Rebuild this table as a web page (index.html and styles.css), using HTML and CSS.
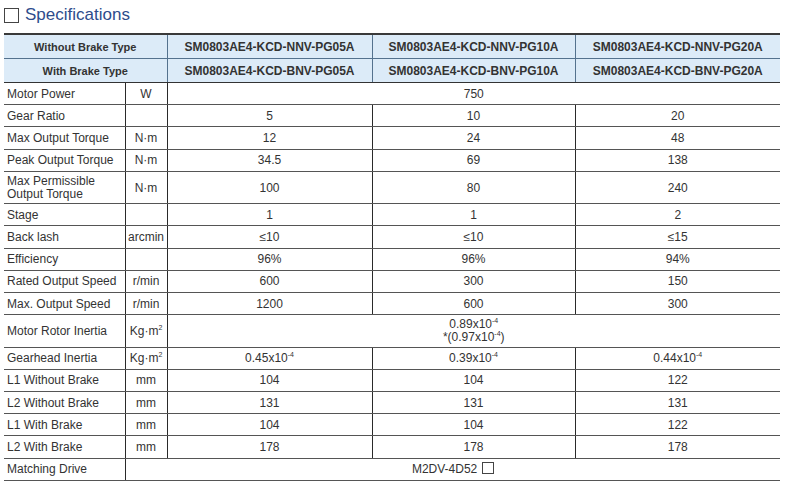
FILE: index.html
```html
<!DOCTYPE html>
<html>
<head>
<meta charset="utf-8">
<link rel="stylesheet" href="styles.css">
</head>
<body>
<div class="page">
  <h2 class="title"><span class="box"></span>Specifications</h2>
  <table class="spec">
    <colgroup>
      <col class="c-label"><col class="c-unit"><col class="c-val"><col class="c-val2"><col class="c-val3">
    </colgroup>
    <tr class="hd hd1">
      <th colspan="2" class="hlabel">Without Brake Type</th>
      <th>SM0803AE4-KCD-NNV-PG05A</th>
      <th>SM0803AE4-KCD-NNV-PG10A</th>
      <th>SM0803AE4-KCD-NNV-PG20A</th>
    </tr>
    <tr class="hd hd2">
      <th colspan="2" class="hlabel">With Brake Type</th>
      <th>SM0803AE4-KCD-BNV-PG05A</th>
      <th>SM0803AE4-KCD-BNV-PG10A</th>
      <th>SM0803AE4-KCD-BNV-PG20A</th>
    </tr>
    <tr><td class="lbl">Motor Power</td><td>W</td><td colspan="3">750</td></tr>
    <tr><td class="lbl">Gear Ratio</td><td></td><td>5</td><td>10</td><td>20</td></tr>
    <tr><td class="lbl">Max Output Torque</td><td>N·m</td><td>12</td><td>24</td><td>48</td></tr>
    <tr><td class="lbl">Peak Output Torque</td><td>N·m</td><td>34.5</td><td>69</td><td>138</td></tr>
    <tr class="tall"><td class="lbl two">Max Permissible<br>Output Torque</td><td>N·m</td><td>100</td><td>80</td><td>240</td></tr>
    <tr><td class="lbl">Stage</td><td></td><td>1</td><td>1</td><td>2</td></tr>
    <tr><td class="lbl">Back lash</td><td>arcmin</td><td>≤10</td><td>≤10</td><td>≤15</td></tr>
    <tr><td class="lbl">Efficiency</td><td></td><td>96%</td><td>96%</td><td>94%</td></tr>
    <tr><td class="lbl">Rated Output Speed</td><td>r/min</td><td>600</td><td>300</td><td>150</td></tr>
    <tr><td class="lbl">Max. Output Speed</td><td>r/min</td><td>1200</td><td>600</td><td>300</td></tr>
    <tr class="tall"><td class="lbl">Motor Rotor Inertia</td><td>Kg·m<sup>2</sup></td><td colspan="3" class="two">0.89x10<sup>-4</sup><br>*(0.97x10<sup>-4</sup>)</td></tr>
    <tr><td class="lbl">Gearhead Inertia</td><td>Kg·m<sup>2</sup></td><td>0.45x10<sup>-4</sup></td><td>0.39x10<sup>-4</sup></td><td>0.44x10<sup>-4</sup></td></tr>
    <tr><td class="lbl">L1 Without Brake</td><td>mm</td><td>104</td><td>104</td><td>122</td></tr>
    <tr><td class="lbl">L2 Without Brake</td><td>mm</td><td>131</td><td>131</td><td>131</td></tr>
    <tr><td class="lbl">L1 With Brake</td><td>mm</td><td>104</td><td>104</td><td>122</td></tr>
    <tr><td class="lbl">L2 With Brake</td><td>mm</td><td>178</td><td>178</td><td>178</td></tr>
    <tr><td class="lbl">Matching Drive</td><td colspan="4">M2DV-4D52 <span class="sq"></span></td></tr>
  </table>
</div>
</body>
</html>
```

FILE: styles.css
```css
html, body {
  margin: 0;
  padding: 0;
  background: #ffffff;
}
.page {
  padding: 0 5px 0 4px;
  font-family: "Liberation Sans", Arial, sans-serif;
  color: #333333;
}
.title {
  margin: 0;
  height: 33px;
  display: flex;
  align-items: center;
  font-weight: normal;
  font-size: 17px;
  color: #2e4c8c;
  padding-bottom: 3px;
  box-sizing: border-box;
}
.title .box {
  display: inline-block;
  width: 13px;
  height: 13px;
  border: 1px solid #444;
  margin-right: 6px;
  margin-top: 1px;
}
.spec {
  border-collapse: collapse;
  width: 776px;
  table-layout: fixed;
  font-size: 12px;
}
.c-label { width: 121px; }
.c-unit { width: 42px; }
.c-val { width: 205px; }
.c-val2 { width: 203px; }
.c-val3 { width: 205px; }
.spec th, .spec td {
  padding: 0;
  text-align: center;
  vertical-align: middle;
  border: 1px solid #555;
  height: 21.2px;
  line-height: 14px;
  white-space: nowrap;
}
.spec td { border-left-color: #2a2a2a; border-right-color: #2a2a2a; }
.spec tr > :first-child { border-left: none; }
.spec tr > :last-child { border-right: none; }
.spec tr.hd1 th { border-top: 2px solid #3a3a3a; }
.spec th {
  background: #dcebf8;
  font-weight: bold;
  height: 23px;
  border-color: #54728e;
  color: #333;
}
.spec tr.hd2 th { border-bottom: 1px solid #333; }
.spec th { font-size: 12px; }
.spec th.hlabel { font-size: 11px; }
.spec td.lbl {
  text-align: left;
  padding-left: 3px;
}
.spec td.two { line-height: 13px; }
.spec tr.tall td { height: 31.5px; }
.spec sup {
  font-size: 7px;
  vertical-align: 5px;
  line-height: 0;
}
.sq {
  display: inline-block;
  width: 10px;
  height: 10px;
  border: 1px solid #444;
  vertical-align: -1px;
  margin-left: 1px;
}
```
